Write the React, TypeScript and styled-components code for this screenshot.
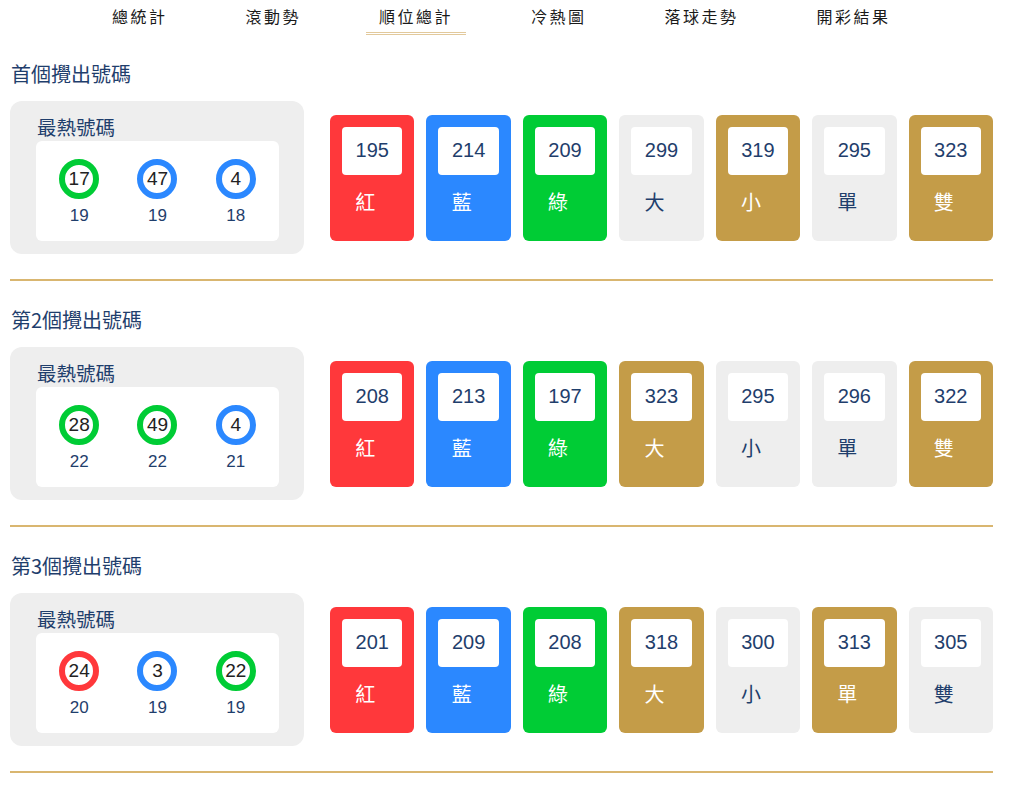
import React from "react";
import styled, { createGlobalStyle } from "styled-components";

const GlobalStyle = createGlobalStyle`
  body {
    margin: 0;
    background: #fff;
    font-family: "Liberation Sans", "Noto Sans CJK TC", sans-serif;
  }
`;

const NAVY = "#1f3e6c";

const palette: Record<string, { bg: string; fg: string }> = {
  red: { bg: "#ff383b", fg: "#fff" },
  blue: { bg: "#2b88ff", fg: "#fff" },
  green: { bg: "#00cc35", fg: "#fff" },
  gray: { bg: "#eeeeee", fg: NAVY },
  gold: { bg: "#c49c48", fg: "#fff" },
};

const ringColors: Record<string, string> = {
  red: "#ff383b",
  blue: "#2b88ff",
  green: "#00cc35",
};

const Nav = styled.nav`
  display: flex;
  gap: 52px;
  padding-left: 99px;
`;

const Tab = styled.div<{ $active?: boolean }>`
  padding: 6px 13px 6px;
  font-family: "Noto Sans CJK TC", sans-serif;
  font-size: 16px;
  line-height: 20px;
  letter-spacing: 2.5px;
  color: #1a1a1a;
  border-bottom: 3px double ${(p) => (p.$active ? "#e2c99c" : "transparent")};
`;

const Main = styled.main`
  padding: 0 30px 0 10px;
`;

const Section = styled.section``;

const Title = styled.h2`
  margin: 25px 0 13px 1px;
  font-family: "Noto Sans CJK TC", sans-serif;
  font-size: 20px;
  line-height: 28px;
  font-weight: 400;
  color: ${NAVY};
`;

const Row = styled.div`
  display: flex;
  align-items: center;
  gap: 26px;
`;

const HotCard = styled.div`
  width: 294px;
  box-sizing: border-box;
  padding: 12px 25px 13px 26px;
  background: #eeeeee;
  border-radius: 12px;
`;

const HotLabel = styled.div`
  font-family: "Noto Sans CJK TC", sans-serif;
  font-size: 19.5px;
  line-height: 28px;
  color: ${NAVY};
  padding-left: 1px;
`;

const HotBox = styled.div`
  display: grid;
  grid-template-columns: repeat(3, 1fr);
  padding: 18px 4px 15px;
  background: #fff;
  border-radius: 6px;
`;

const BallCol = styled.div`
  display: flex;
  flex-direction: column;
  align-items: center;
  gap: 6px;
`;

const Ball = styled.div<{ $color: string }>`
  width: 40px;
  height: 40px;
  box-sizing: border-box;
  border-radius: 50%;
  border: 6px solid ${(p) => p.$color};
  display: flex;
  align-items: center;
  justify-content: center;
  font-size: 19px;
  color: #222;
`;

const Count = styled.div`
  font-size: 17px;
  line-height: 21px;
  color: ${NAVY};
`;

const Cards = styled.div`
  flex: 1;
  display: flex;
  gap: 12px;
`;

const StatCard = styled.div<{ $kind: string }>`
  flex: 1;
  height: 126px;
  box-sizing: border-box;
  padding: 12px;
  border-radius: 6px;
  background: ${(p) => palette[p.$kind].bg};
  display: flex;
  flex-direction: column;
  align-items: center;
`;

const NumBox = styled.div`
  align-self: stretch;
  height: 48px;
  background: #fff;
  border-radius: 4px;
  display: flex;
  align-items: center;
  justify-content: center;
  font-size: 20px;
  color: ${NAVY};
`;

const StatLabel = styled.div<{ $kind: string }>`
  margin-top: 15px;
  padding-right: 14px;
  font-family: "Noto Sans CJK TC", sans-serif;
  font-size: 20px;
  line-height: 24px;
  color: ${(p) => palette[p.$kind].fg};
`;

const Divider = styled.hr`
  margin: 25px 0 0;
  border: none;
  height: 2px;
  background: #d9b670;
`;

const tabs = ["總統計", "滾動勢", "順位總計", "冷熱圖", "落球走勢", "開彩結果"];

const labels = ["紅", "藍", "綠", "大", "小", "單", "雙"];

type Data = {
  title: string;
  balls: { n: number; c: string; count: number }[];
  values: number[];
  kinds: string[];
};

const sections: Data[] = [
  {
    title: "首個攪出號碼",
    balls: [
      { n: 17, c: "green", count: 19 },
      { n: 47, c: "blue", count: 19 },
      { n: 4, c: "blue", count: 18 },
    ],
    values: [195, 214, 209, 299, 319, 295, 323],
    kinds: ["red", "blue", "green", "gray", "gold", "gray", "gold"],
  },
  {
    title: "第2個攪出號碼",
    balls: [
      { n: 28, c: "green", count: 22 },
      { n: 49, c: "green", count: 22 },
      { n: 4, c: "blue", count: 21 },
    ],
    values: [208, 213, 197, 323, 295, 296, 322],
    kinds: ["red", "blue", "green", "gold", "gray", "gray", "gold"],
  },
  {
    title: "第3個攪出號碼",
    balls: [
      { n: 24, c: "red", count: 20 },
      { n: 3, c: "blue", count: 19 },
      { n: 22, c: "green", count: 19 },
    ],
    values: [201, 209, 208, 318, 300, 313, 305],
    kinds: ["red", "blue", "green", "gold", "gray", "gold", "gray"],
  },
];

export default function App() {
  return (
    <>
      <GlobalStyle />
      <Nav>
        {tabs.map((t) => (
          <Tab key={t} $active={t === "順位總計"}>
            {t}
          </Tab>
        ))}
      </Nav>
      <Main>
        {sections.map((s) => (
          <Section key={s.title}>
            <Title>{s.title}</Title>
            <Row>
              <HotCard>
                <HotLabel>最熱號碼</HotLabel>
                <HotBox>
                  {s.balls.map((b, i) => (
                    <BallCol key={i}>
                      <Ball $color={ringColors[b.c]}>{b.n}</Ball>
                      <Count>{b.count}</Count>
                    </BallCol>
                  ))}
                </HotBox>
              </HotCard>
              <Cards>
                {s.values.map((v, i) => (
                  <StatCard key={i} $kind={s.kinds[i]}>
                    <NumBox>{v}</NumBox>
                    <StatLabel $kind={s.kinds[i]}>{labels[i]}</StatLabel>
                  </StatCard>
                ))}
              </Cards>
            </Row>
            <Divider />
          </Section>
        ))}
      </Main>
    </>
  );
}
